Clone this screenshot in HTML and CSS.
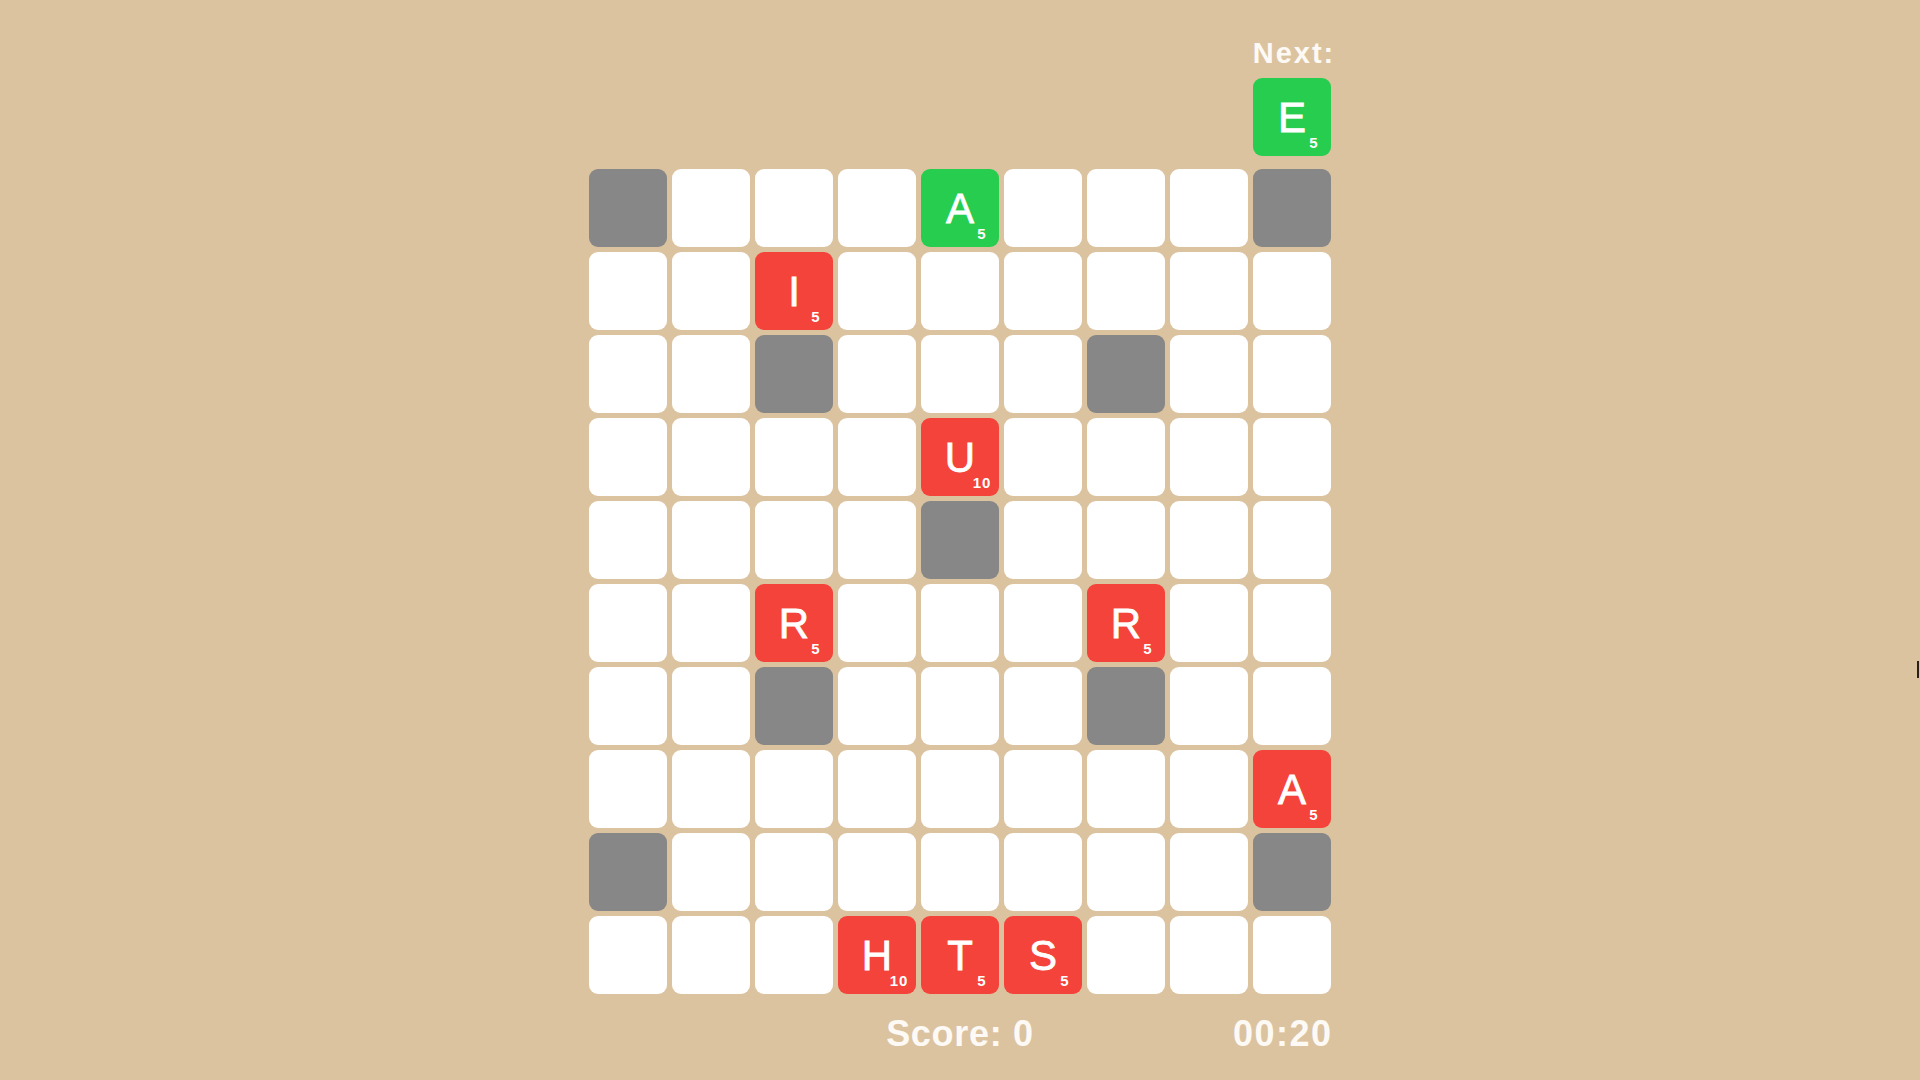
FILE: index.html
```html
<!DOCTYPE html>
<html>
<head>
<meta charset="utf-8">
<link rel="stylesheet" href="styles.css">
</head>
<body>
<div class="game">
  <div class="next-area">
    <div class="next-label">Next:</div>
    <div class="cell tile green"><span class="ch">E</span><span class="pts">5</span></div>
  </div>
  <div class="board">
    <div class="cell block"></div><div class="cell"></div><div class="cell"></div><div class="cell"></div><div class="cell tile green"><span class="ch">A</span><span class="pts">5</span></div><div class="cell"></div><div class="cell"></div><div class="cell"></div><div class="cell block"></div>
    <div class="cell"></div><div class="cell"></div><div class="cell tile red"><span class="ch">I</span><span class="pts">5</span></div><div class="cell"></div><div class="cell"></div><div class="cell"></div><div class="cell"></div><div class="cell"></div><div class="cell"></div>
    <div class="cell"></div><div class="cell"></div><div class="cell block"></div><div class="cell"></div><div class="cell"></div><div class="cell"></div><div class="cell block"></div><div class="cell"></div><div class="cell"></div>
    <div class="cell"></div><div class="cell"></div><div class="cell"></div><div class="cell"></div><div class="cell tile red"><span class="ch">U</span><span class="pts">10</span></div><div class="cell"></div><div class="cell"></div><div class="cell"></div><div class="cell"></div>
    <div class="cell"></div><div class="cell"></div><div class="cell"></div><div class="cell"></div><div class="cell block"></div><div class="cell"></div><div class="cell"></div><div class="cell"></div><div class="cell"></div>
    <div class="cell"></div><div class="cell"></div><div class="cell tile red"><span class="ch">R</span><span class="pts">5</span></div><div class="cell"></div><div class="cell"></div><div class="cell"></div><div class="cell tile red"><span class="ch">R</span><span class="pts">5</span></div><div class="cell"></div><div class="cell"></div>
    <div class="cell"></div><div class="cell"></div><div class="cell block"></div><div class="cell"></div><div class="cell"></div><div class="cell"></div><div class="cell block"></div><div class="cell"></div><div class="cell"></div>
    <div class="cell"></div><div class="cell"></div><div class="cell"></div><div class="cell"></div><div class="cell"></div><div class="cell"></div><div class="cell"></div><div class="cell"></div><div class="cell tile red"><span class="ch">A</span><span class="pts">5</span></div>
    <div class="cell block"></div><div class="cell"></div><div class="cell"></div><div class="cell"></div><div class="cell"></div><div class="cell"></div><div class="cell"></div><div class="cell"></div><div class="cell block"></div>
    <div class="cell"></div><div class="cell"></div><div class="cell"></div><div class="cell tile red"><span class="ch">H</span><span class="pts">10</span></div><div class="cell tile red"><span class="ch">T</span><span class="pts">5</span></div><div class="cell tile red"><span class="ch">S</span><span class="pts">5</span></div><div class="cell"></div><div class="cell"></div><div class="cell"></div>
  </div>
  <div class="footer">
    <div class="score">Score: 0</div>
    <div class="timer">00:20</div>
  </div>
</div>
<div class="cursor"></div>
</body>
</html>
```

FILE: styles.css
```css
html, body {
  margin: 0;
  padding: 0;
  background: #dcc3a0;
  height: 100%;
  overflow: hidden;
}
body {
  font-family: "Liberation Sans", Arial, sans-serif;
  color: #fdfaf5;
  position: relative;
}
.game {
  width: 742px;
  margin: 0 auto;
  padding-top: 39px;
  display: flex;
  flex-direction: column;
}
.next-area {
  align-self: flex-end;
  display: flex;
  flex-direction: column;
  align-items: center;
  width: 78px;
  margin-bottom: 13px;
}
.next-label {
  font-size: 29px;
  line-height: 29px;
  font-weight: bold;
  letter-spacing: 2px;
  white-space: nowrap;
  margin-bottom: 10px;
  margin-right: -4px;
}
.board {
  display: grid;
  grid-template-columns: repeat(9, 78px);
  grid-auto-rows: 78px;
  gap: 5px;
}
.cell {
  width: 78px;
  height: 78px;
  border-radius: 9px;
  background: #ffffff;
  position: relative;
  box-sizing: border-box;
}
.block { background: #878787; }
.tile {
  display: flex;
  align-items: center;
  justify-content: center;
}
.green { background: #27cd4f; }
.red { background: #f4433a; }
.ch {
  font-size: 42px;
  line-height: 42px;
  padding-top: 2px;
  color: #ffffff;
  -webkit-text-stroke: 0.8px #ffffff;
}
.pts {
  position: absolute;
  right: 5px;
  bottom: 6px;
  width: 24px;
  text-align: center;
  font-size: 15px;
  line-height: 15px;
  font-weight: bold;
  letter-spacing: 1px;
  color: #ffffff;
}
.footer {
  display: grid;
  grid-template-columns: 1fr auto 1fr;
  margin-top: 22px;
  font-size: 36px;
  line-height: 36px;
  font-weight: bold;
  letter-spacing: 0.7px;
}
.score {
  grid-column: 2;
  text-align: center;
}
.timer {
  grid-column: 3;
  justify-self: end;
  letter-spacing: 1.5px;
  margin-right: -1.5px;
}
.cursor {
  position: absolute;
  left: 1917px;
  top: 661px;
  width: 2px;
  height: 17px;
  background: #2a2018;
}
```
